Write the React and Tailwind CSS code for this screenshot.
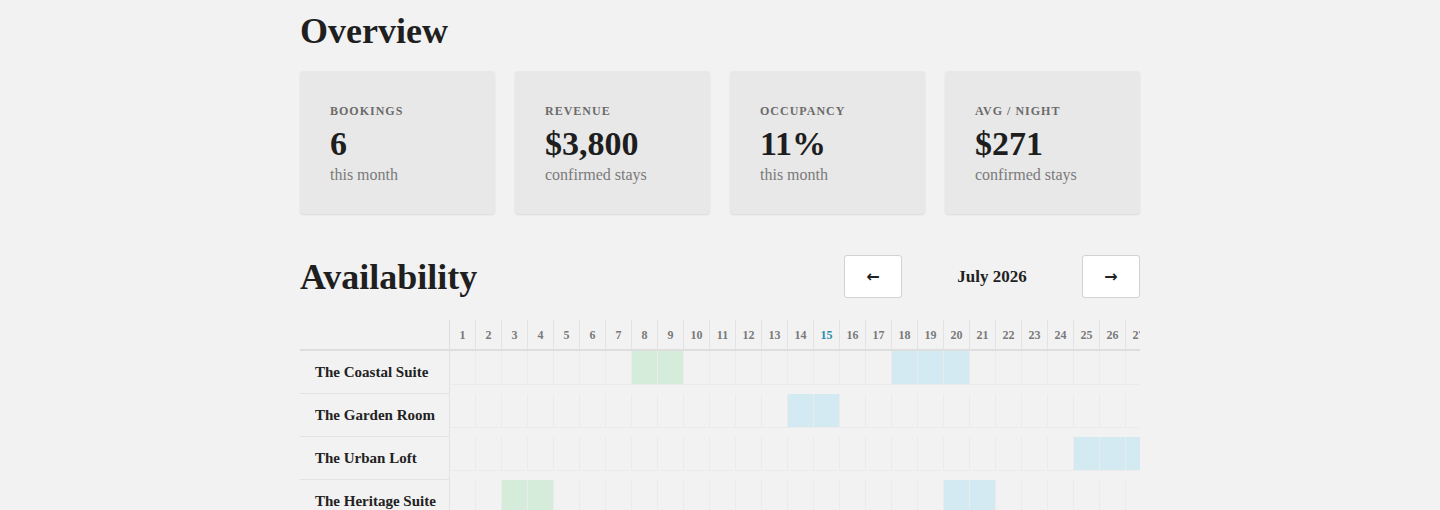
import React from "react";

const serif = { fontFamily: '"Liberation Serif", "Times New Roman", serif' };

const stats = [
  { label: "Bookings", value: "6", note: "this month" },
  { label: "Revenue", value: "$3,800", note: "confirmed stays" },
  { label: "Occupancy", value: "11%", note: "this month" },
  { label: "Avg / Night", value: "$271", note: "confirmed stays" },
];

// stays per unit: [from, to, kind]
const units = [
  { name: "The Coastal Suite", stays: [[8, 9, "direct"], [18, 20, "ota"]] },
  { name: "The Garden Room", stays: [[14, 15, "ota"]] },
  { name: "The Urban Loft", stays: [[25, 28, "ota"]] },
  { name: "The Heritage Suite", stays: [[3, 4, "direct"], [20, 21, "ota"]] },
];

const days = Array.from({ length: 31 }, (_, i) => i + 1);
const today = 15;

const kindFor = (stays, d) => {
  const hit = stays.find(([a, b]) => d >= a && d <= b);
  return hit ? hit[2] : null;
};

const StatCard = ({ label, value, note }) => (
  <div className="h-[143px] rounded-[4px] bg-[#e8e8e8] px-[30px] pt-8 shadow-[0_1px_2px_rgba(0,0,0,0.1)]">
    <div className="text-[12px] leading-4 font-bold uppercase tracking-[1px] text-[#6b6b6b]">
      {label}
    </div>
    <div className="mt-2 text-[34px] leading-none font-bold text-[#1e1e1e]">{value}</div>
    <div className="mt-1 text-[16px] leading-5 text-[#7a7a7a]">{note}</div>
  </div>
);

const App = () => {
  return (
    <div className="min-h-screen bg-[#f2f2f2]" style={serif}>
      <div className="mx-auto w-[840px] pt-[13px] pb-10">
        <h1 className="text-[36px] leading-none font-bold text-[#1f1f1f]">Overview</h1>

        <div className="mt-[22px] grid grid-cols-4 gap-5">
          {stats.map((s) => (
            <StatCard key={s.label} {...s} />
          ))}
        </div>

        <div className="mt-[41px] flex h-[43px] items-center justify-between">
          <h2 className="text-[36px] leading-none font-bold text-[#1f1f1f]">Availability</h2>
          <div className="flex items-center">
            <button className="flex h-[43px] w-[58px] items-center justify-center rounded-[3px] border border-[#d2d2d2] bg-white text-[16px] font-bold text-[#222]" style={{ fontFamily: '"DejaVu Sans", sans-serif' }}>
              ←
            </button>
            <div className="w-[180px] pt-px text-center text-[17px] font-bold text-[#222]">July 2026</div>
            <button className="flex h-[43px] w-[58px] items-center justify-center rounded-[3px] border border-[#d2d2d2] bg-white text-[16px] font-bold text-[#222]" style={{ fontFamily: '"DejaVu Sans", sans-serif' }}>
              →
            </button>
          </div>
        </div>

        <div className="mt-[22px] overflow-hidden">
          <div className="w-max">
            {/* day header */}
            <div className="flex h-[31px] border-b-2 border-[#dedede]">
              <div className="w-[150px] shrink-0 border-r border-[#dedede]" />
              {days.map((d) => (
                <div
                  key={d}
                  className={`flex w-[26px] shrink-0 items-center justify-center border-r border-[#e3e3e3] text-[12px] font-bold ${
                    d === today ? "text-[#2b8cae]" : "text-[#7a7a7a]"
                  }`}
                >
                  {d}
                </div>
              ))}
            </div>

            {units.map((u) => (
              <div key={u.name} className="flex h-[43px]">
                <div className="flex w-[150px] shrink-0 items-center border-r border-b border-[#e2e2e2] pl-[15px] text-[15px] font-bold text-[#222]">
                  {u.name}
                </div>
                {days.map((d) => {
                  const kind = kindFor(u.stays, d);
                  return (
                    <div
                      key={d}
                      className={`h-[34px] w-[26px] shrink-0 border-r border-b border-[#ebebeb] ${
                        kind === "direct" ? "bg-[#d4ecd9]" : kind === "ota" ? "bg-[#d3eaf2]" : ""
                      }`}
                    />
                  );
                })}
              </div>
            ))}
          </div>
        </div>
      </div>
    </div>
  );
};

export default App;
